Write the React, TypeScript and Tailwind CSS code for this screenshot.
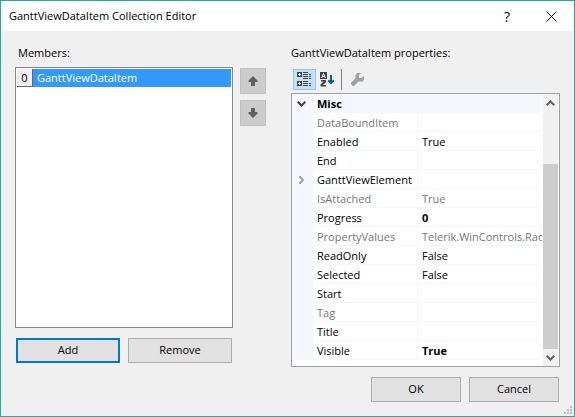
import type { ReactNode } from "react";

type Property = { name: string; value?: string; readOnly?: boolean; changed?: boolean; expandable?: boolean };

const properties: Property[] = [
  { name: "DataBoundItem", readOnly: true },
  { name: "Enabled", value: "True" },
  { name: "End" },
  { name: "GanttViewElement", expandable: true },
  { name: "IsAttached", value: "True", readOnly: true },
  { name: "Progress", value: "0", changed: true },
  { name: "PropertyValues", value: "Telerik.WinControls.Rad", readOnly: true },
  { name: "ReadOnly", value: "False" },
  { name: "Selected", value: "False" },
  { name: "Start" },
  { name: "Tag", readOnly: true },
  { name: "Title" },
  { name: "Visible", value: "True", changed: true },
];

function PushButton({ children, primary, className = "" }: { children: ReactNode; primary?: boolean; className?: string }) {
  return (
    <button
      type="button"
      className={`flex h-[25px] items-center justify-center bg-[#e1e1e1] ${primary ? "border-2 border-[#0078d7]" : "border border-[#adadad]"} ${className}`}
    >
      {children}
    </button>
  );
}

function MoveButton({ label, down }: { label: string; down?: boolean }) {
  return (
    <button type="button" aria-label={label} className="flex size-[26px] items-center justify-center border border-[#bfbfbf] bg-[#cccccc]">
      <svg width="10" height="10" viewBox="0 0 10 10" fill="#606060" className={down ? "rotate-180" : ""}>
        <path d="M5 0 9.5 4.5V6H7V10H3V6H.5V4.5Z" />
      </svg>
    </button>
  );
}

function Chevron({ className = "", color }: { className?: string; color: string }) {
  return (
    <svg width="9" height="6" viewBox="0 0 9 6" fill="none" stroke={color} strokeWidth="2" className={className}>
      <path d="M.7.8 4.5 4.5 8.3.8" />
    </svg>
  );
}

function CategorizedIcon() {
  return (
    <svg width="15" height="15" viewBox="0 0 15 15" shapeRendering="crispEdges">
      <path fill="#424242" d="M0 0h5v5H0zM0 9h5v5H0zM6 0h5v1H6zM6 2h5v1H6zM6 4h5v1H6zM6 6h5v1H6zM6 9h5v1H6zM6 11h5v1H6zM6 13h5v1H6zM12 2h2v1h-2zM12 4h2v1h-2zM12 6h2v1h-2zM12 11h2v1h-2zM12 13h2v1h-2z" />
      <path fill="#fff" d="M2 1h1v1h1v1H3v1H2V3H1V2h1zM2 10h1v1h1v1H3v1H2v-1H1v-1h1z" />
    </svg>
  );
}

function AlphabeticalIcon() {
  return (
    <svg width="14" height="15" viewBox="0 0 14 15">
      <path fill="#424242" d="M0 0h7v7H0zM1 8h5v2L3 13h3v1.5H0.5V12.5L3.5 9.5H1z" />
      <path fill="none" stroke="#fff" d="M1.7 6 3.5 1.5 5.3 6M2.2 4.5h2.6" />
      <path fill="none" stroke="#00639c" strokeWidth="2" d="M11 3v8M8.3 8.3 11 11l2.7-2.7" />
    </svg>
  );
}

function WrenchIcon() {
  return (
    <svg width="13" height="13" viewBox="0 0 13 13" fill="#a0a0a0">
      <path d="M9.8.3A3.6 3.6 0 0 0 4.7 5L.5 9.3a1.7 1.7 0 0 0 0 2.4l.7.7a1.7 1.7 0 0 0 2.4 0L7.8 8.2A3.6 3.6 0 0 0 12.6 3L10.3 5.2 8.2 4.7 7.6 2.5Z" />
    </svg>
  );
}

function PropertyGrid() {
  return (
    <div className="flex border border-[#a0a0a0] bg-white pr-px">
      <div className="min-w-0 flex-1 pb-[6px]">
        <table className="w-full table-fixed border-separate border-spacing-0 text-left">
          <colgroup>
            <col className="w-[21px]" />
            <col className="w-[105px]" />
            <col />
          </colgroup>
          <tbody>
            <tr className="h-[19px] bg-[#f4f7fc]">
              <td className="p-0">
                <Chevron color="#424242" className="ml-[5px]" />
              </td>
              <th colSpan={2} className="p-0 pl-1 leading-[18px] font-bold">Misc</th>
            </tr>
            {properties.map((p) => (
              <tr key={p.name} className={`h-[19px] ${p.readOnly ? "text-[#787878]" : "text-black"}`}>
                <td className="bg-[#f4f7fc] p-0">
                  {p.expandable && <Chevron color="#a0a0a0" className="ml-[5px] -rotate-90" />}
                </td>
                <th className="border-r border-b border-[#f4f7fc] p-0 pt-[2px] pl-1 leading-4 font-normal whitespace-nowrap">{p.name}</th>
                <td className={`overflow-hidden border-b border-[#f4f7fc] p-0 pt-[2px] pl-1 leading-4 whitespace-nowrap ${p.changed ? "font-bold" : ""}`}>{p.value}</td>
              </tr>
            ))}
          </tbody>
        </table>
      </div>
      <div className="ml-px flex w-[15px] flex-col bg-[#f0f0f0]">
        <button type="button" aria-label="Scroll up" className="flex h-[17px] items-center justify-center">
          <Chevron color="#606060" className="rotate-180" />
        </button>
        <div className="flex flex-1 flex-col justify-end">
          <div className="h-[185px] bg-[#cdcdcd]" />
        </div>
        <button type="button" aria-label="Scroll down" className="flex h-[17px] items-center justify-center">
          <Chevron color="#606060" />
        </button>
      </div>
    </div>
  );
}

export default function App() {
  return (
    <div className="flex min-h-screen flex-col border border-[#1eb09e] bg-[#f0f0f0] font-['Open_Sans','Noto_Sans',sans-serif] text-[11px] text-black">
      <header className="flex h-[30px] items-center bg-white pr-[17px] pl-2">
        <h1 className="flex-1">GanttViewDataItem Collection Editor</h1>
        <button type="button" aria-label="Help" className="mr-[36px] text-[14px]">?</button>
        <button type="button" aria-label="Close">
          <svg width="11" height="11" viewBox="0 0 11 11" stroke="#000" fill="none">
            <path d="M.5.5l10 10M10.5.5l-10 10" />
          </svg>
        </button>
      </header>

      <main className="grid flex-1 grid-cols-[minmax(0,218fr)_58px_minmax(0,269fr)] px-[14px] pt-3">
        <section className="flex flex-col">
          <h2 id="members" className="mb-[4px] pl-[3px] leading-5">Members:</h2>
          <ul role="listbox" aria-labelledby="members" className="h-[261px] border border-[#828790] bg-white p-px">
            <li role="option" aria-selected="true" className="flex h-[18px] bg-[#3399ff] leading-[17px] text-white">
              <span className="w-4 border-r border-b border-[#696969] bg-[#f0f0f0] text-center text-black">0</span>
              <span className="pl-1">GanttViewDataItem</span>
            </li>
          </ul>
          <div className="mt-[10px] grid grid-cols-2 gap-2 px-px">
            <PushButton primary>Add</PushButton>
            <PushButton>Remove</PushButton>
          </div>
        </section>

        <div className="flex flex-col gap-[6px] pt-[25px] pl-[7px]">
          <MoveButton label="Move up" />
          <MoveButton label="Move down" down />
        </div>

        <section>
          <h2 className="leading-5">GanttViewDataItem properties:</h2>
          <div className="mt-[6px] mb-[3px] flex h-[21px] items-center pl-[2px]">
            <button type="button" aria-label="Categorized" aria-pressed="true" className="flex h-[21px] w-[23px] items-center justify-center border border-[#90c8f6] bg-[#c4e0f5]">
              <CategorizedIcon />
            </button>
            <button type="button" aria-label="Alphabetical" className="ml-[4px]">
              <AlphabeticalIcon />
            </button>
            <span className="ml-[7px] h-[21px] w-px bg-[#808080]" />
            <button type="button" disabled aria-label="Property pages" className="ml-[9px]">
              <WrenchIcon />
            </button>
          </div>
          <PropertyGrid />
          <div className="mt-[10px] flex justify-end gap-2 pr-px">
            <PushButton className="w-[90px]">OK</PushButton>
            <PushButton className="w-[90px]">Cancel</PushButton>
          </div>
        </section>
      </main>

      <footer className="flex justify-end pr-[2px] pb-[2px]">
        <svg width="8" height="8" viewBox="0 0 8 8" fill="#bfbfbf" shapeRendering="crispEdges">
          <path d="M6 0h2v2H6zM6 3h2v2H6zM3 3h2v2H3zM6 6h2v2H6zM3 6h2v2H3zM0 6h2v2H0z" />
        </svg>
      </footer>
    </div>
  );
}
